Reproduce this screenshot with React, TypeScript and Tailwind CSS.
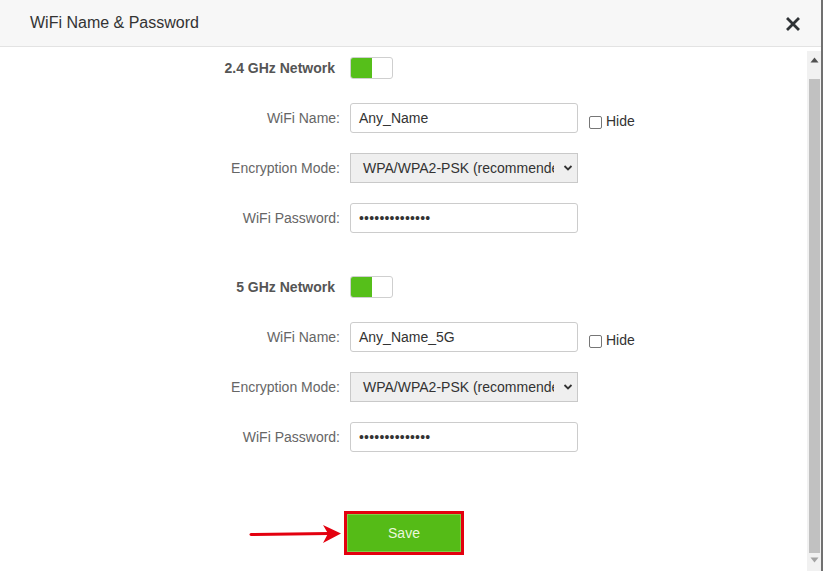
import React from "react";

const font = { fontFamily: '"Liberation Sans", Arial, sans-serif' };

function Toggle() {
  return (
    <div className="flex h-[22px] w-[43px] overflow-hidden rounded-[3px] border border-[#cfcfcf] bg-white">
      <div className="h-full w-[21px] bg-[#56bf1a]" />
    </div>
  );
}

function Row({ label, bold, children, className }: { label: string; bold?: boolean; children: React.ReactNode; className?: string }) {
  return (
    <div className={"flex h-[30px] items-center " + (className ?? "")}>
      <div
        className={
          "w-[340px] text-right text-[14px] " +
          (bold ? "pr-[5px] font-bold text-[#555555]" : "text-[#666666]")
        }
      >
        {label}
      </div>
      <div className="ml-[10px] flex items-center">{children}</div>
    </div>
  );
}

function TextBox({ value, hide }: { value: string; hide?: boolean }) {
  return (
    <>
      <div className="flex h-[30px] w-[228px] items-center rounded-[3px] border border-[#cccccc] bg-white pl-[8px] text-[14px] text-[#333333]">
        {value}
      </div>
      {hide && (
        <div className="ml-[11px] mt-[7px] flex items-center">
          <div className="mt-[1px] h-[13px] w-[13px] rounded-[2px] border border-[#767676] bg-white" />
          <span className="ml-[4px] text-[14px] text-[#333333]">Hide</span>
        </div>
      )}
    </>
  );
}

function Password() {
  return (
    <div className="flex h-[30px] w-[228px] items-center rounded-[3px] border border-[#cccccc] bg-white pl-[8px] text-[14px] tracking-[0.2px] text-[#333333]">
      ••••••••••••••
    </div>
  );
}

function SelectBox() {
  return (
    <div className="relative flex h-[30px] w-[228px] items-center border border-[#c9c9c9] bg-[#efefef] text-[14px] text-[#333333]">
      <div className="w-[203px] overflow-hidden whitespace-nowrap pl-[12px]">WPA/WPA2-PSK (recommended)</div>
      <svg className="absolute right-[4px] top-[10px]" width="10" height="8" viewBox="0 0 10 8">
        <path d="M1.5 2 L5 5.5 L8.5 2" fill="none" stroke="#333" strokeWidth="1.8" />
      </svg>
    </div>
  );
}

export default function App() {
  return (
    <div className="flex h-[571px] w-[823px] flex-col overflow-hidden border-r-2 border-[#707070] bg-white" style={font}>
      <div className="flex h-[47px] shrink-0 items-center justify-between border-b border-[#e3e3e3] bg-[#f7f7f7] pl-[30px] pr-[21px]">
        <span className="text-[16px] text-[#333333]">WiFi Name &amp; Password</span>
        <svg width="14" height="14" viewBox="0 0 14 14" className="mt-[2px]">
          <path d="M2 2 L12 12 M12 2 L2 12" stroke="#2f3336" strokeWidth="2.8" strokeLinecap="square" />
        </svg>
      </div>
      <div className="flex min-h-0 flex-1">
        <div className="w-[807px] pt-[6px]">
          <Row label="2.4 GHz Network" bold>
            <Toggle />
          </Row>
          <Row label="WiFi Name:" className="mt-[20px]">
            <TextBox value="Any_Name" hide />
          </Row>
          <Row label="Encryption Mode:" className="mt-[20px]">
            <SelectBox />
          </Row>
          <Row label="WiFi Password:" className="mt-[20px]">
            <Password />
          </Row>

          <Row label="5 GHz Network" bold className="mt-[39px]">
            <Toggle />
          </Row>
          <Row label="WiFi Name:" className="mt-[20px]">
            <TextBox value="Any_Name_5G" hide />
          </Row>
          <Row label="Encryption Mode:" className="mt-[20px]">
            <SelectBox />
          </Row>
          <Row label="WiFi Password:" className="mt-[20px]">
            <Password />
          </Row>

          <div className="mt-[59px] flex h-[44px] items-center pl-[249px]">
            <svg width="95" height="22" viewBox="0 0 95 22" className="mt-[2px]">
              <path d="M2 11.5 L80 10.5" stroke="#e3000f" strokeWidth="3" strokeLinecap="round" />
              <path d="M74 2 L92 10.5 L74 20 L79 10.5 Z" fill="#e3000f" />
            </svg>
            <div className="h-[44px] w-[120px] border-[3px] border-[#e3000f] bg-[#e3000f]">
              <div className="flex h-full w-full items-center justify-center border border-[#7fcf4a] bg-[#55bb17] text-[14px] text-[#eaf7dc]">
                Save
              </div>
            </div>
          </div>
        </div>
        <div className="relative mt-[4px] flex w-[14px] flex-col items-center bg-[#f1f1f1]">
          <svg width="9" height="6" viewBox="0 0 9 6" className="mt-[6px]">
            <path d="M0.5 5.5 L4.5 0.5 L8.5 5.5 Z" fill="#505050" />
          </svg>
          <div className="mt-[16px] h-[474px] w-[11px] bg-[#c1c1c1]" />
          <svg width="9" height="6" viewBox="0 0 9 6" className="mt-[4px]">
            <path d="M0.5 0.5 L4.5 5.5 L8.5 0.5 Z" fill="#a3a3a3" />
          </svg>
        </div>
      </div>
    </div>
  );
}
